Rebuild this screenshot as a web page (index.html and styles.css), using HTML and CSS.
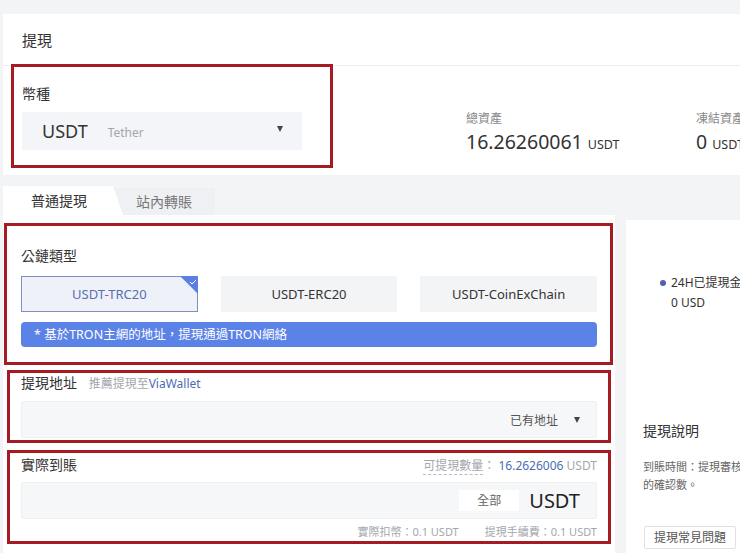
FILE: index.html
```html
<!DOCTYPE html>
<html lang="zh-Hant">
<head>
    <meta charset="UTF-8">
    <title>提現</title>
    <link rel="stylesheet" href="styles.css">
</head>
<body>
<div class="page">
    <div class="asset_card">
        <div class="card_head">提現</div>
        <div class="card_body">
            <div class="mark coin_box">
                <div class="label">幣種</div>
                <div class="coin_select">
                    <span class="coin_name">USDT</span>
                    <span class="coin_full">Tether</span>
                    <span class="arrow"></span>
                </div>
            </div>
            <div class="stats">
                <div class="stat">
                    <div class="stat_label">總資產</div>
                    <div class="stat_value">16.26260061 <span class="unit">USDT</span></div>
                </div>
                <div class="stat">
                    <div class="stat_label">凍結資產</div>
                    <div class="stat_value">0 <span class="unit">USDT</span></div>
                </div>
            </div>
        </div>
    </div>

    <div class="tabs">
        <div class="tab active">普通提現</div>
        <div class="tab">站內轉賬</div>
    </div>

    <div class="main">
        <div class="form_panel">
            <div class="mark chain_box">
                <div class="label">公鏈類型</div>
                <div class="chains">
                    <div class="chain selected">
                        USDT-TRC20
                        <svg class="corner" viewBox="0 0 18 18">
                            <path d="M0,0H18V18Z" fill="#5b80e3"></path>
                            <path d="M10,6l2,2 4,-4" fill="none" stroke="#fff" stroke-width="1"></path>
                        </svg>
                    </div>
                    <div class="chain">USDT-ERC20</div>
                    <div class="chain">USDT-CoinExChain</div>
                </div>
                <div class="notice">* 基於TRON主網的地址，提現通過TRON網絡</div>
            </div>

            <div class="mark addr_box">
                <div class="label">提現地址 <span class="hint">推薦提現至<span class="link">ViaWallet</span></span></div>
                <div class="field">
                    <span class="field_right">已有地址</span>
                    <span class="arrow"></span>
                </div>
            </div>

            <div class="mark amount_box">
                <div class="row">
                    <div class="label">實際到賬</div>
                    <div class="avail"><span class="dotted">可提現數量</span>： <span class="link">16.2626006</span> USDT</div>
                </div>
                <div class="field">
                    <span class="all_btn">全部</span>
                    <span class="field_unit">USDT</span>
                </div>
                <div class="fees">
                    <span>實際扣幣：0.1 USDT</span>
                    <span>提現手續費：0.1 USDT</span>
                </div>
            </div>
        </div>

        <div class="side_panel">
            <div class="limit"><span class="dot"></span>24H已提現金額</div>
            <div class="limit_value">0 USD</div>
            <div class="side_title">提現說明</div>
            <div class="side_text">到賬時間：提現審核<br>的確認數。</div>
            <div class="faq_btn">提現常見問題</div>
        </div>
    </div>
</div>
</body>
</html>
```

FILE: styles.css
```css
body{
    margin: 0;
    background-color: #f3f4f6;
    font-family: "Noto Sans", "Noto Sans CJK TC", sans-serif;
    color: #333;
    overflow: hidden;
}
.page{
    padding-left: 3px;
    height: 553px;
}
.mark{
    border: 3px solid #a61b21;
    box-sizing: border-box;
    flex-shrink: 0;
}
.label{
    font-size: 14px;
    line-height: 20px;
    color: #333;
}
.arrow{
    width: 0;
    height: 0;
    border-left: 3px solid transparent;
    border-right: 3px solid transparent;
    border-top: 6px solid #444;
}

/* top card */
.asset_card{
    margin-top: 14px;
    background-color: #fff;
    height: 161px;
}
.card_head{
    height: 51px;
    line-height: 52px;
    padding-left: 19px;
    font-size: 15px;
    border-bottom: 1px solid #eceef1;
}
.card_body{
    display: flex;
    align-items: flex-start;
}
.coin_box{
    margin-top: -2px;
    margin-left: 8px;
    width: 322px;
    padding: 17px 0 15px 8px;
}
.coin_box .label{
    margin-bottom: 8px;
}
.coin_select{
    display: flex;
    align-items: center;
    width: 280px;
    height: 38px;
    background-color: #f3f5f8;
    box-sizing: border-box;
    padding-left: 20px;
}
.coin_name{
    font-size: 18px;
}
.coin_full{
    font-size: 12px;
    color: #a3a7ad;
    margin-left: 20px;
    margin-top: 3px;
}
.coin_select .arrow{
    margin-left: auto;
    margin-right: 19px;
    margin-top: -4px;
}
.stats{
    display: flex;
    margin-left: 133px;
    margin-top: 44px;
}
.stat{
    width: 230px;
    flex-shrink: 0;
}
.stat_label{
    font-size: 12px;
    line-height: 18px;
    color: #888;
}
.stat_value{
    font-size: 19.5px;
    line-height: 28px;
    white-space: nowrap;
}
.unit{
    font-size: 12.5px;
}

/* tabs */
.tabs{
    display: flex;
    margin-top: 11px;
    height: 29px;
}
.tab{
    width: 102px;
    margin-top: 2px;
    margin-left: -10px;
    background-color: #eef0f3;
    font-size: 14px;
    line-height: 27px;
    text-align: center;
    color: #777;
    box-sizing: border-box;
}
.tab.active{
    position: relative;
    z-index: 2;
    width: 120px;
    margin: 0;
    padding: 0 8px 0 0;
    background-color: #fff;
    color: #333;
    line-height: 30px;
    clip-path: polygon(0 0, 110px 0, 120px 100%, 0 100%);
}

/* main */
.main{
    display: flex;
    gap: 11px;
}
.form_panel{
    width: 612px;
    flex-shrink: 0;
    background-color: #fff;
    padding-top: 8px;
    height: 330px;
}
.chain_box{
    margin-left: 1px;
    width: 609px;
    padding: 20px 13px 15px 14px;
}
.chains{
    display: grid;
    grid-template-columns: repeat(3, 1fr);
    gap: 23px;
    margin-top: 10px;
}
.chain{
    position: relative;
    height: 36px;
    line-height: 36px;
    text-align: center;
    font-size: 13px;
    background-color: #f3f4f6;
    box-sizing: border-box;
}
.chain.selected{
    background-color: #eef2f8;
    border: 1px solid #8190bd;
    line-height: 34px;
    color: #5a6fb3;
}
.corner{
    position: absolute;
    top: -1px;
    right: -1px;
    width: 18px;
    height: 18px;
}
.notice{
    margin-top: 10px;
    height: 25px;
    line-height: 25px;
    border-radius: 4px;
    background-color: #5b82e6;
    color: #fff;
    font-size: 12.5px;
    padding-left: 13px;
}
.addr_box{
    margin: 5px 0 0 4px;
    width: 604px;
    padding: 0 11px 2px 11px;
}
.hint{
    font-size: 12px;
    color: #a3a7ad;
    margin-left: 8px;
}
.link{
    color: #4d6db3;
}
.field{
    display: flex;
    align-items: center;
    justify-content: flex-end;
    margin-top: 7px;
    height: 37px;
    width: 576px;
    background-color: #f6f7f9;
    border: 1px solid #eef0f2;
    border-radius: 2px;
    box-sizing: border-box;
    padding-right: 16px;
}
.field_right{
    font-size: 12px;
    color: #555;
    margin-right: 16px;
}
.amount_box{
    margin: 7px 0 0 4px;
    width: 604px;
    padding: 2px 11px 1px 11px;
}
.row{
    display: flex;
    justify-content: space-between;
    align-items: center;
    width: 576px;
}
.avail{
    font-size: 12px;
    color: #a3a7ad;
}
.dotted{
    border-bottom: 1px dashed #b8bbc0;
}
.all_btn{
    width: 60px;
    height: 21px;
    line-height: 21px;
    text-align: center;
    background-color: #fff;
    font-size: 12px;
    color: #666;
    margin-right: 10px;
}
.field_unit{
    font-size: 20px;
    color: #222;
}
.fees{
    display: flex;
    justify-content: flex-end;
    gap: 26px;
    width: 576px;
    margin-top: 5px;
    font-size: 11px;
    line-height: 16px;
    color: #a3a7ad;
}

/* side */
.side_panel{
    flex: 1;
    margin-top: 5px;
    background-color: #fff;
    overflow: hidden;
    white-space: nowrap;
    padding-left: 17px;
    height: 340px;
}
.limit{
    margin-top: 53px;
    margin-left: 17px;
    font-size: 12px;
    line-height: 20px;
    display: flex;
    align-items: center;
}
.dot{
    flex-shrink: 0;
    width: 6px;
    height: 6px;
    border-radius: 50%;
    background-color: #5360b0;
    margin-right: 5px;
}
.limit_value{
    margin-left: 28px;
    font-size: 12px;
    line-height: 20px;
}
.side_title{
    margin-top: 108px;
    font-size: 14px;
    line-height: 20px;
}
.side_text{
    margin-top: 17px;
    font-size: 11px;
    line-height: 18px;
    color: #666;
}
.faq_btn{
    display: inline-block;
    margin-top: 32px;
    margin-left: 1px;
    padding: 0 9px;
    height: 21px;
    line-height: 21px;
    font-size: 12px;
    color: #555;
    border: 1px solid #dfe1e5;
    border-radius: 2px;
}
```
